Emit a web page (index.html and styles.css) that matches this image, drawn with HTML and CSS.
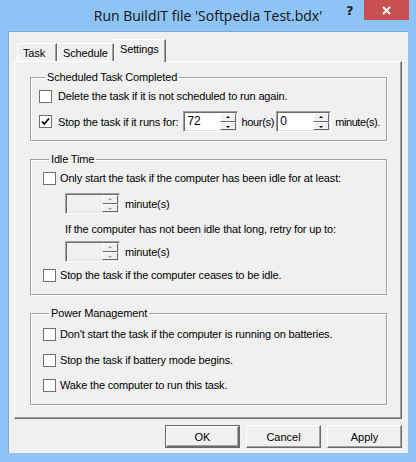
FILE: index.html
```html
<!DOCTYPE html>
<html lang="en">
<head>
  <meta charset="UTF-8">
  <title>Run BuildIT file</title>
  <link rel="stylesheet" href="styles.css">
</head>
<body>
  <div class="window">
    <!-- Caption -->
    <div class="titlebar">
      <span class="title">Run BuildIT file 'Softpedia Test.bdx'</span>
      <span class="help">?</span>
      <span class="close">
        <svg width="9" height="9" viewBox="0 0 9 9"><path d="M1 1L8 8M8 1L1 8" stroke="#fff" stroke-width="2"/></svg>
      </span>
    </div>

    <div class="client">
      <!-- Tabs -->
      <div class="tabs">
        <div class="tab tab-task">Task</div>
        <div class="tab tab-schedule">Schedule</div>
        <div class="tab tab-settings active">Settings</div>
      </div>

      <div class="panel">
        <!-- Scheduled Task Completed -->
        <fieldset class="group g1">
          <legend>Scheduled Task Completed</legend>
          <div class="row r1">
            <span class="check"></span>
            <span class="label">Delete the task if it is not scheduled to run again.</span>
          </div>
          <div class="row r2">
            <span class="check checked">
              <svg width="11" height="11" viewBox="0 0 11 11"><path d="M2 5.5L4.3 8L9 2.5" fill="none" stroke="#000" stroke-width="1.8"/></svg>
            </span>
            <span class="label">Stop the task if it runs for:</span>
            <span class="spin s-hours"><span class="field">72</span><span class="arrows"><i class="up"></i><i class="down"></i></span></span>
            <span class="unit u-hours">hour(s)</span>
            <span class="spin s-mins"><span class="field">0</span><span class="arrows"><i class="up"></i><i class="down"></i></span></span>
            <span class="unit u-mins">minute(s).</span>
          </div>
        </fieldset>

        <!-- Idle Time -->
        <fieldset class="group g2">
          <legend>Idle Time</legend>
          <div class="row i1">
            <span class="check"></span>
            <span class="label">Only start the task if the computer has been idle for at least:</span>
          </div>
          <div class="row sub i2">
            <span class="spin disabled"><span class="field"></span><span class="arrows"><i class="up"></i><i class="down"></i></span></span>
            <span class="unit">minute(s)</span>
          </div>
          <div class="row sub i3">
            <span class="label">If the computer has not been idle that long, retry for up to:</span>
          </div>
          <div class="row sub i4">
            <span class="spin disabled"><span class="field"></span><span class="arrows"><i class="up"></i><i class="down"></i></span></span>
            <span class="unit">minute(s)</span>
          </div>
          <div class="row i5">
            <span class="check"></span>
            <span class="label">Stop the task if the computer ceases to be idle.</span>
          </div>
        </fieldset>

        <!-- Power Management -->
        <fieldset class="group g3">
          <legend>Power Management</legend>
          <div class="row p1">
            <span class="check"></span>
            <span class="label">Don't start the task if the computer is running on batteries.</span>
          </div>
          <div class="row p2">
            <span class="check"></span>
            <span class="label">Stop the task if battery mode begins.</span>
          </div>
          <div class="row p3">
            <span class="check"></span>
            <span class="label">Wake the computer to run this task.</span>
          </div>
        </fieldset>
      </div>

      <!-- Dialog buttons -->
      <div class="buttons">
        <button class="btn default">OK</button>
        <button class="btn">Cancel</button>
        <button class="btn">Apply</button>
      </div>
    </div>
  </div>
</body>
</html>
```

FILE: styles.css
```css
/* Base */
* { box-sizing: border-box; }
html, body {
  margin: 0;
  padding: 0;
  width: 416px;
  height: 462px;
  overflow: hidden;
  background: #8ec4f5;
  font-family: "Liberation Sans", Arial, sans-serif;
  font-size: 11px;
  letter-spacing: -0.15px;
  color: #000;
}

/* Window frame */
.window {
  width: 416px;
  height: 462px;
  background: #8ec4f5;
}
.titlebar {
  position: relative;
  height: 31px;
  text-align: center;
}
.title {
  display: inline-block;
  padding-top: 6px;
  font-family: "Open Sans", "Noto Sans", sans-serif;
  font-size: 14px;
  line-height: 20px;
  letter-spacing: 0;
  color: #111;
}
/* caption buttons sit over the title bar */
.help {
  position: absolute;
  left: 346px;
  top: 3px;
  font-family: "DejaVu Sans", sans-serif;
  font-weight: bold;
  font-size: 13px;
  color: #222;
}
.close {
  position: absolute;
  left: 364px;
  top: 0;
  width: 45px;
  height: 20px;
  background: #c75050;
  display: flex;
  align-items: center;
  justify-content: center;
}

.client {
  margin: 0 8px;
  height: 422px;
  background: #f0f0f0;
  border-left: 1px solid #7fa9d1;
  border-top: 1px solid #7fa9d1;
}

/* Tabs */
.tabs {
  display: flex;
  align-items: flex-end;
  height: 29px;
  padding: 0 0 0 8px;
}
.tab {
  height: 18px;
  padding: 3px 0 0 5px;
  background: #f0f0f0;
  border-top: 1px solid #fff;
  border-left: 1px solid #fff;
  border-right: 1px solid #696969;
  box-shadow: inset -1px 0 0 #a0a0a0;
  line-height: 13px;
}
.tab-task { width: 40px; }
.tab-schedule { width: 57px; }
.tab.active {
  width: 52px;
  height: 23px;
  margin-bottom: -1px;
  padding-top: 3px;
  padding-left: 5px;
  position: relative;
  z-index: 1;
}

.panel {
  margin-left: 5px;
  width: 388px;
  height: 358px;
  padding: 9px 0 0 15px;
  border-top: 1px solid #fff;
  border-left: 1px solid #fff;
  border-right: 1px solid #696969;
  border-bottom: 1px solid #696969;
  box-shadow: inset -1px -1px 0 #a0a0a0;
}

/* Group boxes */
.group {
  width: 357px;
  margin: 0;
  padding: 0;
  border: 1px solid #a0a0a0;
  box-shadow: inset 1px 1px 0 #fff, 1px 1px 0 #fff;
  min-inline-size: 0;
}
.group legend {
  margin-left: 6px;
  padding: 0 2px;
  line-height: 13px;
  height: 13px;
}
.g1 { padding: 2px 0 7px 8px; }
.g2 { margin-top: 12px; padding: 2px 0 9px 12px; }
.g3 { margin-top: 12px; padding: 4px 0 9px 12px; }

.row {
  display: flex;
  align-items: center;
  height: 20px;
  white-space: nowrap;
}
.r2 { height: 23px; margin-top: 4px; }
.sub { padding-left: 22px; }
.i2 { height: 21px; margin-top: 5px; }
.i3 { height: 16px; margin-top: 7px; }
.i4 { height: 21px; margin-top: 4px; }
.i5 { margin-top: 3px; }
.p2 { margin-top: 6px; }
.p3 { margin-top: 5px; }

/* Checkboxes */
.check {
  width: 13px;
  height: 13px;
  flex: none;
  margin-right: 6px;
  background: #fff;
  border: 1px solid #707070;
  display: flex;
  align-items: center;
  justify-content: center;
}
.g2 .check, .g3 .check { margin-right: 4px; }

/* Spin edits */
.spin {
  display: flex;
  width: 55px;
  height: 21px;
  flex: none;
  border-top: 1px solid #a0a0a0;
  border-left: 1px solid #a0a0a0;
  border-right: 1px solid #fff;
  border-bottom: 1px solid #fff;
  box-shadow: inset 1px 1px 0 #696969, inset -1px -1px 0 #e3e3e3;
  background: #fff;
  padding: 1px;
}
.spin .field {
  flex: 1;
  padding-left: 2px;
  font-size: 12px;
  line-height: 17px;
  letter-spacing: 0;
}
.spin .arrows {
  width: 16px;
  display: flex;
  flex-direction: column;
}
.spin i {
  flex: 1;
  position: relative;
  background: #f0f0f0;
  border-top: 1px solid #fff;
  border-left: 1px solid #fff;
  border-right: 1px solid #696969;
  border-bottom: 1px solid #696969;
}
.spin i::after {
  content: "";
  position: absolute;
  left: 5px;
  top: 2px;
  border-left: 2px solid transparent;
  border-right: 2px solid transparent;
}
.spin i.up::after { border-bottom: 2px solid #000; }
.spin i.down::after { border-top: 2px solid #000; top: 3px; }
.spin.disabled { background: #f0f0f0; }
.spin.disabled i::after { border-bottom-color: #a0a0a0; border-top-color: #a0a0a0; }

.s-hours { margin-left: 5px; }
.u-hours { margin-left: 3px; letter-spacing: -0.3px; }
.s-mins { margin-left: 2px; }
.u-mins { margin-left: 4px; letter-spacing: -0.4px; }
.sub .unit { margin-left: 5px; }

/* Dialog buttons */
.buttons {
  display: flex;
  justify-content: flex-end;
  gap: 6px;
  margin-top: 6px;
  padding-right: 6px;
}
.btn {
  width: 75px;
  height: 23px;
  padding: 0;
  font-family: "Liberation Sans", Arial, sans-serif;
  font-size: 11px;
  color: #000;
  background: #f0f0f0;
  border-top: 1px solid #fff;
  border-left: 1px solid #fff;
  border-right: 1px solid #696969;
  border-bottom: 1px solid #696969;
  box-shadow: inset -1px -1px 0 #a0a0a0;
}
.btn.default {
  outline: 1px solid #696969;
  outline-offset: -1px;
  border-width: 2px;
}
```
